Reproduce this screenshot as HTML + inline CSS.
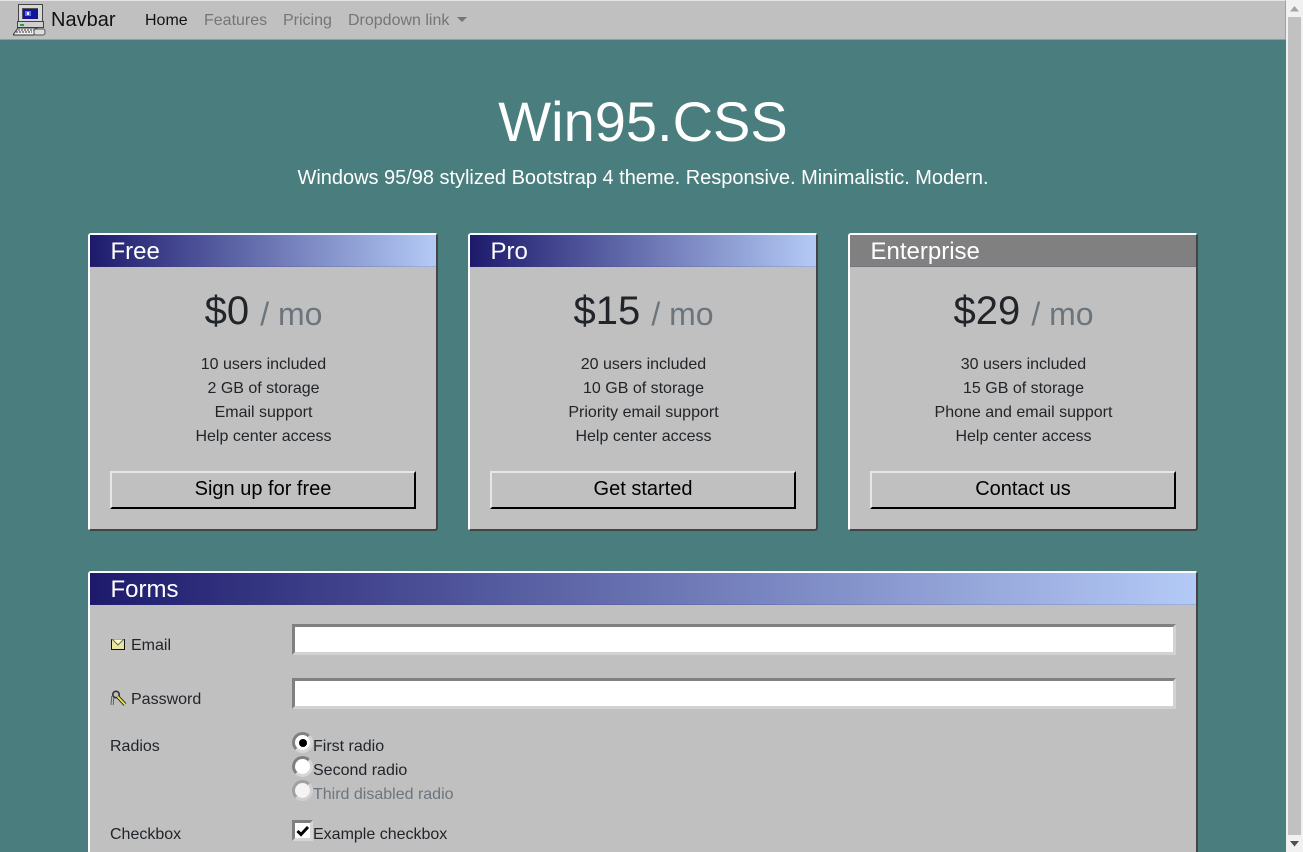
<!DOCTYPE html>
<html lang="en"><head><meta charset="utf-8"><title>Win95.CSS</title>
<style>
*{box-sizing:border-box}
html,body{margin:0;padding:0;width:1303px;height:852px;overflow:hidden}
body{background:#4a7e7e;font:16px/24px "Liberation Sans",Arial,sans-serif;color:#212529;position:relative}
.a{position:absolute;white-space:nowrap}
.nav{left:0;top:0;width:1286px;height:40px;background:#c0c0c0;border-top:1px solid #e4e4e4;border-bottom:1px solid #9a9a9a;border-right:1px solid #a0a0a0}
.l{top:9px;color:#757575}
.card{position:absolute;background:#c0c0c0;border:2px solid;border-color:#fff #444 #444 #fff;border-radius:3px}
.hd{position:absolute;left:0;top:0;right:0;height:32px;background:linear-gradient(90deg,#1d1a6c,#b4caf6);color:#fff;font-size:24px;line-height:33px;padding-left:20.500px;border-bottom:1px solid rgba(60,60,120,.18)}
.hd.g{background:#808080}
.price{position:absolute;left:.5px;width:100%;top:52px;text-align:center;font-size:40px;line-height:48px}
.price small{font-size:32px;color:#6c757d;position:relative;top:1px}
.ul{position:absolute;left:.5px;width:100%;top:118px;text-align:center}
.btn{position:absolute;left:20px;top:236px;width:306px;height:38px;border:2px solid;border-color:#e6e6e6 #000 #000 #e6e6e6;text-align:center;font-size:20px;line-height:32px;color:#000}
.inp{position:absolute;left:292px;width:884px;height:31px;background:#fff;border:3px solid;border-color:#808080 #d2d2d2 #d2d2d2 #808080}
.rad{position:absolute;left:292px;width:21px;height:21px;border-radius:50%;background:#fff;border:3px solid;border-color:#808080 #d6d6d6 #d6d6d6 #808080}
.rad.d{border-color:#a0a0a0 #cfcfcf #cfcfcf #a0a0a0;background:#f4f4f4}
</style></head><body>

<div class="a nav"></div>
<svg class="a" style="left:13px;top:4px" width="33" height="33" viewBox="0 0 33 33" shape-rendering="crispEdges">
<rect x="5" y="0" width="25" height="18" fill="#444"/><rect x="6" y="1" width="23" height="16" fill="#d8d8d8"/>
<rect x="9" y="4" width="16" height="11" fill="#14149a"/><rect x="9" y="4" width="16" height="1" fill="#555"/><rect x="9" y="4" width="1" height="11" fill="#555"/>
<rect x="12" y="7" width="6" height="5" fill="#5c6cf0"/><rect x="14" y="8" width="2" height="3" fill="#e6ecff"/>
<rect x="4" y="17" width="27" height="7" fill="#444"/><rect x="5" y="18" width="25" height="5" fill="#cfcfcf"/>
<rect x="7" y="20" width="4" height="2" fill="#20a040"/>
<path d="M5 24h19l-3 7H0z" fill="#eee" stroke="#333" shape-rendering="auto"/>
<path d="M5 26h16M3 28h16" stroke="#333" stroke-dasharray="2 1"/>
<rect x="21" y="25" width="11" height="6" rx="2" fill="#ddd" stroke="#555" shape-rendering="auto"/>
</svg>
<div class="a" style="left:51px;top:8px;font-size:20px;line-height:24px;color:#111">Navbar</div>
<div class="a l" style="left:145px;color:#111">Home</div>
<div class="a l" style="left:204px">Features</div>
<div class="a l" style="left:283px">Pricing</div>
<div class="a l" style="left:348px">Dropdown link</div>
<svg class="a" style="left:457px;top:17px" width="10" height="5"><path d="M0 0h10L5 5z" fill="#757575"/></svg>

<!-- scrollbar -->
<div class="a" style="left:1286px;top:0;width:17px;height:852px;background:#f1f1f1"></div>
<div class="a" style="left:1288px;top:17px;width:13px;height:835px;background:#c1c1c1"></div>
<div class="a" style="left:1286px;top:835px;width:17px;height:17px;background:#f1f1f1"></div>
<svg class="a" style="left:1290px;top:6px" width="9" height="6"><path d="M4.500 0L9 5.500H0z" fill="#a3a3a3"/></svg>
<svg class="a" style="left:1290px;top:841px" width="9" height="6"><path d="M0 0h9L4.500 5.500z" fill="#505050"/></svg>

<div class="a" style="left:0;width:1286px;top:88px;text-align:center;font-size:56px;line-height:67px;color:#fff">Win95.CSS</div>
<div class="a" style="left:0;width:1286px;top:163px;text-align:center;font-size:20px;line-height:30px;color:#fff;letter-spacing:-.02px">Windows 95/98 stylized Bootstrap 4 theme. Responsive. Minimalistic. Modern.</div>

<div class="card" style="left:88px;top:233px;width:350px;height:298px">
<div class="hd">Free</div>
<div class="price">$0 <small>/ mo</small></div>
<div class="ul">10 users included<br>2 GB of storage<br>Email support<br>Help center access</div>
<div class="btn">Sign up for free</div>
</div>
<div class="card" style="left:468px;top:233px;width:350px;height:298px">
<div class="hd">Pro</div>
<div class="price">$15 <small>/ mo</small></div>
<div class="ul">20 users included<br>10 GB of storage<br>Priority email support<br>Help center access</div>
<div class="btn">Get started</div>
</div>
<div class="card" style="left:848px;top:233px;width:350px;height:298px">
<div class="hd g">Enterprise</div>
<div class="price">$29 <small>/ mo</small></div>
<div class="ul">30 users included<br>15 GB of storage<br>Phone and email support<br>Help center access</div>
<div class="btn">Contact us</div>
</div>

<div class="card" style="left:88px;top:571px;width:1110px;height:300px">
<div class="hd">Forms</div>
</div>

<svg class="a" style="left:111px;top:639px" width="14" height="11" shape-rendering="crispEdges"><rect width="14" height="11" fill="#111"/><rect x="1" y="0" width="12" height="10" fill="#e9e6a0"/><path d="M1 0l6 6 6-6z" fill="#fffcc0" stroke="#666" stroke-width="1" shape-rendering="auto"/></svg>
<div class="a" style="left:131px;top:634px">Email</div>
<div class="inp" style="top:624px"></div>

<svg class="a" style="left:110px;top:690px" width="17" height="17" viewBox="0 0 17 17"><path d="M3 6l-1 9" stroke="#444" stroke-width="3"/><path d="M3 6l-1 9" stroke="#bbb" stroke-width="1.500"/><circle cx="6" cy="4.500" r="3.200" fill="#c0c0c0" stroke="#333" stroke-width="1.600"/><path d="M7.500 6.500l7.500 8" stroke="#222" stroke-width="3.600"/><path d="M7.500 6.500l7.500 8" stroke="#f2e64a" stroke-width="1.800"/></svg>
<div class="a" style="left:131px;top:688px">Password</div>
<div class="inp" style="top:678px"></div>

<div class="a" style="left:110px;top:735px">Radios</div>
<div class="rad" style="top:732px"></div>
<div class="a" style="left:299px;top:739px;width:8px;height:8px;border-radius:50%;background:#000"></div>
<div class="a" style="left:313px;top:735px">First radio</div>
<div class="rad" style="top:756px"></div>
<div class="a" style="left:313px;top:759px">Second radio</div>
<div class="rad d" style="top:780px"></div>
<div class="a" style="left:313px;top:783px;color:#6c757d">Third disabled radio</div>

<div class="a" style="left:110px;top:823px">Checkbox</div>
<div class="a" style="left:292px;top:820px;width:21px;height:21px;background:#fff;border:3px solid;border-color:#808080 #d6d6d6 #d6d6d6 #808080"></div>
<svg class="a" style="left:296px;top:825px" width="14" height="12"><path d="M1.500 6l3.500 3.500L12 2" fill="none" stroke="#000" stroke-width="3"/></svg>
<div class="a" style="left:313px;top:823px">Example checkbox</div>

</body></html>
